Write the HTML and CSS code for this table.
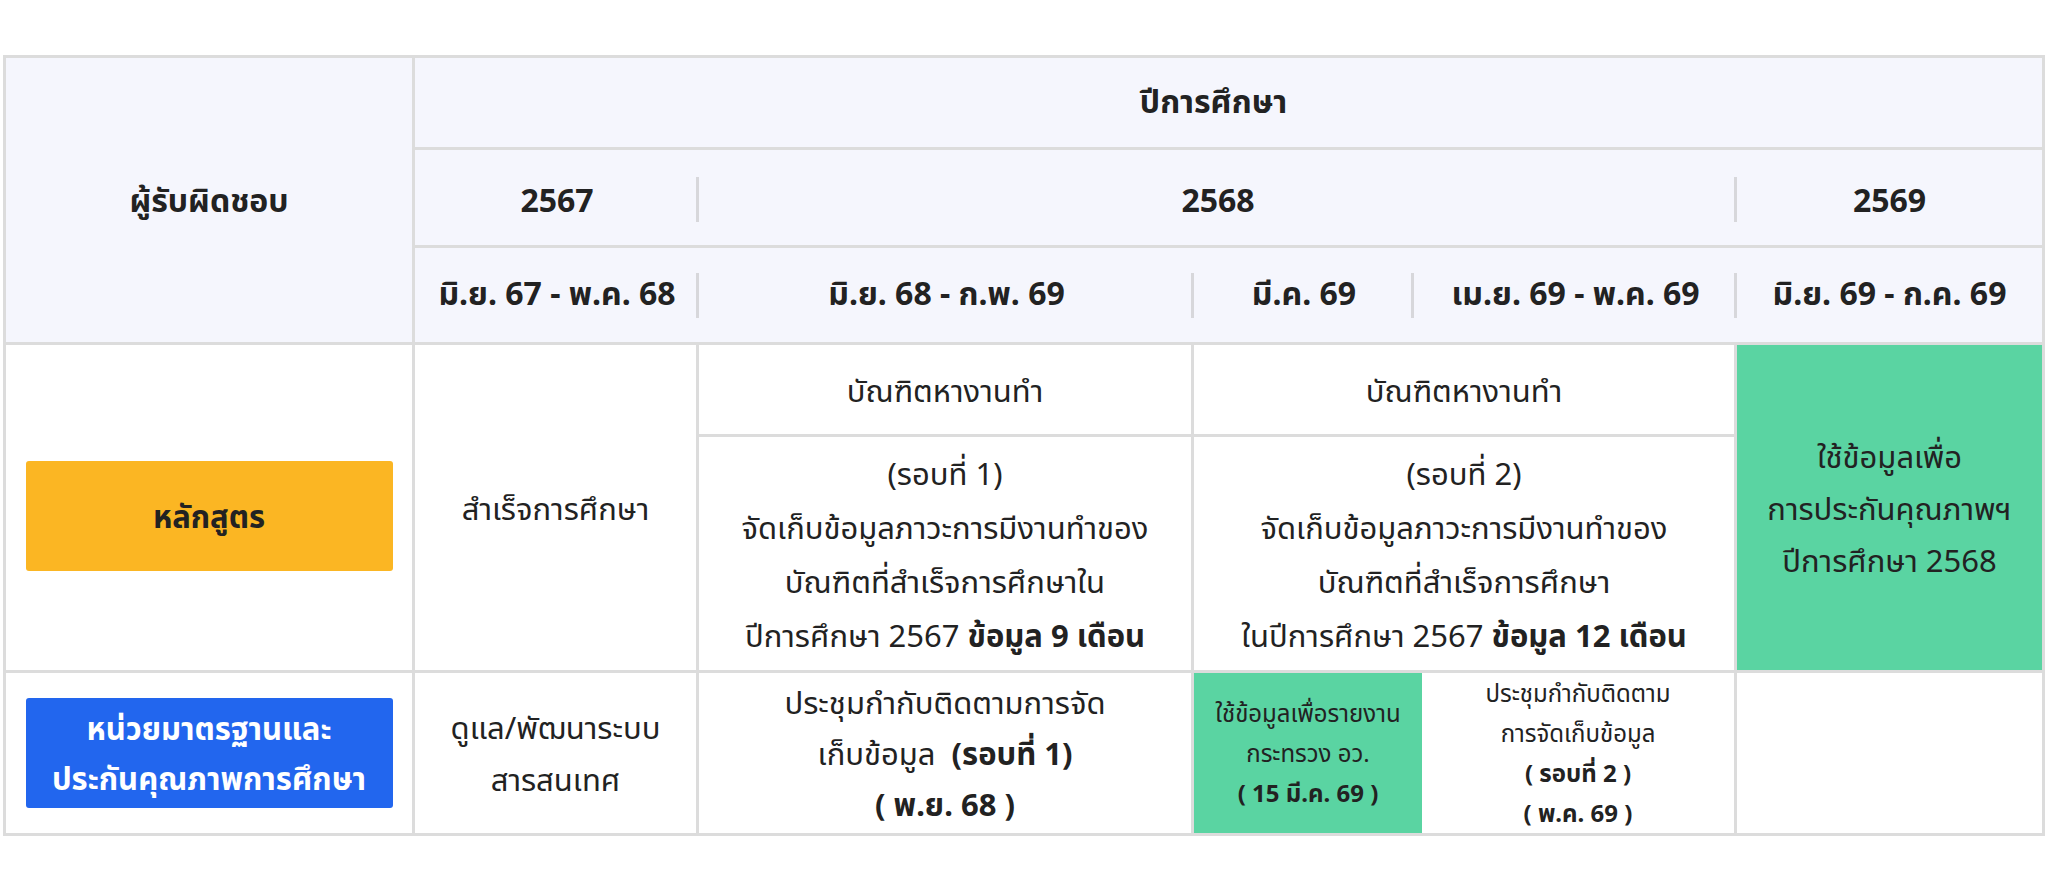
FILE: index.html
```html
<!DOCTYPE html>
<html lang="th">
<head>
<meta charset="utf-8">
<title>ตารางดำเนินงาน</title>
<link rel="stylesheet" href="styles.css">
</head>
<body>
<div class="table">
  <div class="head">
    <div class="head-owner">ผู้รับผิดชอบ</div>
    <div class="head-right">
      <div class="hrow hrow-title">ปีการศึกษา</div>
      <div class="hrow hrow-years">
        <div class="hcell sep w1">2567</div>
        <div class="hcell sep w234">2568</div>
        <div class="hcell w5">2569</div>
      </div>
      <div class="hrow hrow-months">
        <div class="hcell sep w1">มิ.ย. 67 - พ.ค. 68</div>
        <div class="hcell sep w2">มิ.ย. 68 - ก.พ. 69</div>
        <div class="hcell sep w3">มี.ค. 69</div>
        <div class="hcell sep w4">เม.ย. 69 - พ.ค. 69</div>
        <div class="hcell w5">มิ.ย. 69 - ก.ค. 69</div>
      </div>
    </div>
  </div>

  <div class="brow brow1">
    <div class="bcell c0"><div class="tag tag-yellow">หลักสูตร</div></div>
    <div class="bcell c1"><div class="txt">สำเร็จการศึกษา</div></div>
    <div class="bcell c2 split">
      <div class="sub sub-top"><div class="txt">บัณฑิตหางานทำ</div></div>
      <div class="sub sub-bottom"><div class="txt">(รอบที่ 1)<br>จัดเก็บข้อมูลภาวะการมีงานทำของ<br>บัณฑิตที่สำเร็จการศึกษาใน<br>ปีการศึกษา 2567 <b>ข้อมูล 9 เดือน</b></div></div>
    </div>
    <div class="bcell c34 split">
      <div class="sub sub-top"><div class="txt">บัณฑิตหางานทำ</div></div>
      <div class="sub sub-bottom"><div class="txt">(รอบที่ 2)<br>จัดเก็บข้อมูลภาวะการมีงานทำของ<br>บัณฑิตที่สำเร็จการศึกษา<br>ในปีการศึกษา 2567 <b>ข้อมูล 12 เดือน</b></div></div>
    </div>
    <div class="bcell c5 green"><div class="txt">ใช้ข้อมูลเพื่อ<br>การประกันคุณภาพฯ<br>ปีการศึกษา 2568</div></div>
  </div>

  <div class="brow brow2">
    <div class="bcell c0"><div class="tag tag-blue">หน่วยมาตรฐานและ<br>ประกันคุณภาพการศึกษา</div></div>
    <div class="bcell c1"><div class="txt">ดูแล/พัฒนาระบบ<br>สารสนเทศ</div></div>
    <div class="bcell c2"><div class="txt tight">ประชุมกำกับติดตามการจัด<br>เก็บข้อมูล&nbsp; <b>(รอบที่ 1)</b><br><b>( พ.ย. 68 )</b></div></div>
    <div class="bcell c3g green noborder"><div class="txt small">ใช้ข้อมูลเพื่อรายงาน<br>กระทรวง อว.<br><b>( 15 มี.ค. 69 )</b></div></div>
    <div class="bcell c4s"><div class="txt small">ประชุมกำกับติดตาม<br>การจัดเก็บข้อมูล<br><b>( รอบที่ 2 )</b><br><b>( พ.ค. 69 )</b></div></div>
    <div class="bcell c5"></div>
  </div>
</div>
</body>
</html>
```

FILE: styles.css
```css
* { box-sizing: border-box; }

html, body {
  margin: 0;
  padding: 0;
  background: #ffffff;
}

body {
  font-family: "Noto Sans", "Noto Sans Thai", "Noto Sans CJK SC", sans-serif;
  color: #222222;
}

.table {
  margin: 55px 0 0 3px;
  width: 2042px;
  border: 3px solid #dcdcdc;
  display: flex;
  flex-direction: column;
}

/* ---------- header ---------- */
.head {
  display: flex;
  background: #f5f6fd;
  border-bottom: 3px solid #dcdcdc;
  height: 287px;
}

.head-owner {
  width: 409px;
  flex: none;
  border-right: 3px solid #dcdcdc;
  display: flex;
  align-items: center;
  justify-content: center;
  font-weight: 700;
  font-size: 32px;
  white-space: nowrap;
  padding-top: 3px;
}

.head-right {
  flex: 1;
  display: flex;
  flex-direction: column;
}

.hrow {
  display: flex;
  align-items: center;
  font-weight: 700;
  font-size: 32px;
  white-space: nowrap;
}

.hrow-title {
  height: 92px;
  justify-content: center;
  padding-right: 30px;
  border-bottom: 3px solid #dcdcdc;
}

.hrow-years {
  height: 98px;
  border-bottom: 3px solid #dcdcdc;
  padding-top: 3px;
}

.hrow-months {
  height: 94px;
}

.hcell {
  position: relative;
  height: 100%;
  display: flex;
  align-items: center;
  justify-content: center;
}

.hcell.sep::after {
  content: "";
  position: absolute;
  right: 0;
  top: 50%;
  margin-top: -22px;
  width: 3px;
  height: 45px;
  background: #d7d7db;
}

.w1 { width: 284px; }
.w2 { width: 495px; }
.w3 { width: 220px; }
.w4 { width: 323px; }
.w234 { width: 1038px; }
.w5 { width: 305px; }

/* ---------- body ---------- */
.brow {
  display: flex;
  border-bottom: 3px solid #dcdcdc;
  font-size: 31px;
  line-height: 52px;
}

.brow1 { height: 328px; }
.brow2 { height: 160px; border-bottom: none; }

.bcell {
  flex: none;
  border-right: 3px solid #dcdcdc;
  display: flex;
  align-items: center;
  justify-content: center;
  text-align: center;
}

.txt {
  white-space: nowrap;
  text-align: center;
}

.c0 { width: 409px; }
.c1 { width: 284px; }
.c2 { width: 495px; }
.c34 { width: 543px; }
.c5 { width: 305px; border-right: none; }
.c3g { width: 228px; }
.c4s { width: 315px; }

.noborder { border-right: none; }

.brow1 .c0 { padding-top: 17px; }

.split {
  flex-direction: column;
  align-items: stretch;
}

.sub {
  display: flex;
  align-items: center;
  justify-content: center;
}

.sub-top {
  height: 92px;
  border-bottom: 3px solid #dcdcdc;
  flex: none;
}

.sub-bottom {
  flex: 1;
  line-height: 54px;
}

.green {
  background: #5ad4a2;
}

.small {
  font-size: 24px;
  line-height: 40px;
}

.tight { line-height: 51px; }

b { font-weight: 700; }

.tag {
  display: flex;
  align-items: center;
  justify-content: center;
  text-align: center;
  width: 367px;
  height: 110px;
  border-radius: 3px;
  font-weight: 700;
  font-size: 31px;
  line-height: 50px;
  white-space: nowrap;
}

.tag-yellow {
  background: #fbb623;
  color: #222222;
}

.tag-blue {
  background: #2266ee;
  color: #ffffff;
}
```
